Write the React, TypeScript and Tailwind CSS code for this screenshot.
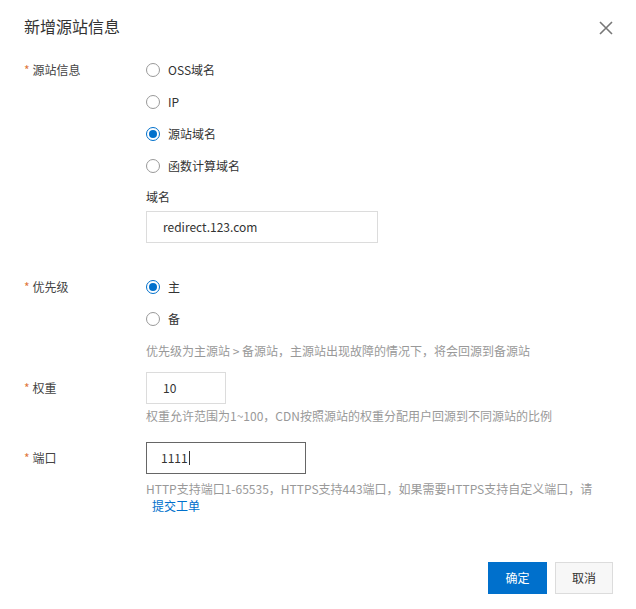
import React from 'react';

const font = { fontFamily: '"Noto Sans CJK SC", "Liberation Sans", sans-serif' };

function Radio({ checked, label }: { checked?: boolean; label: string }) {
  return (
    <div className="flex items-center h-8">
      <span className={checked
        ? "w-[14px] h-[14px] rounded-full border border-[#0070cc] flex items-center justify-center"
        : "w-[14px] h-[14px] rounded-full border border-[#999] bg-white"}>
        {checked && <span className="w-[8px] h-[8px] rounded-full bg-[#0070cc]" />}
      </span>
      <span className="ml-[8px] text-[12px] text-[#333]">{label}</span>
    </div>
  );
}

function Label({ text }: { text: string }) {
  return (
    <div className="w-[122px] shrink-0 text-[12px] text-[#444] h-8 flex items-center">
      <span className="text-[#e0763b] mr-[3px]">*</span>{text}
    </div>
  );
}

export default function App() {
  return (
    <div className="w-[636px] h-[609px] bg-white relative" style={font}>
      <div className="flex items-center justify-between pl-[24px] pr-[22px] pt-[14px]">
        <h1 className="text-[16px] text-[#333]">新增源站信息</h1>
        <svg width="16" height="16" viewBox="0 0 16 16" className="mt-[4px]">
          <path d="M2 2L14 14M14 2L2 14" stroke="#777" strokeWidth="1.6" />
        </svg>
      </div>

      <div className="pl-[24px] pt-[16px]">
        <div className="flex">
          <Label text="源站信息" />
          <div>
            <Radio label="OSS域名" />
            <Radio label="IP" />
            <Radio checked label="源站域名" />
            <Radio label="函数计算域名" />
            <div className="text-[12px] text-[#333] h-[28px] flex items-center mt-[1px]">域名</div>
            <div className="w-[232px] h-[32px] border border-[#dcdcdc] flex items-center pl-[16px] text-[12px] text-[#333]">redirect.123.com</div>
          </div>
        </div>

        <div className="flex mt-[28px]">
          <Label text="优先级" />
          <div>
            <Radio checked label="主" />
            <Radio label="备" />
            <div className="text-[12px] text-[#999] h-[31px] flex items-center">优先级为主源站 &gt; 备源站，主源站出现故障的情况下，将会回源到备源站</div>
          </div>
        </div>

        <div className="flex mt-[6px]">
          <Label text="权重" />
          <div>
            <div className="w-[80px] h-[32px] border border-[#dcdcdc] flex items-center pl-[16px] text-[12px] text-[#333]">10</div>
            <div className="text-[12px] text-[#999] h-[22px] flex items-center mt-[1px]">权重允许范围为1~100，CDN按照源站的权重分配用户回源到不同源站的比例</div>
          </div>
        </div>

        <div className="flex mt-[15px]">
          <Label text="端口" />
          <div>
            <div className="w-[160px] h-[32px] border border-[#666] flex items-center pl-[14px] text-[12px] text-[#333]">1111<span className="w-px h-[14px] bg-[#333] ml-px" /></div>
            <div className="text-[12px] text-[#999] mt-[6px] leading-[17px]">HTTP支持端口1-65535，HTTPS支持443端口，如果需要HTTPS支持自定义端口，请</div>
            <div className="text-[12px] text-[#0070cc] pl-[6px] leading-[17px]">提交工单</div>
          </div>
        </div>
      </div>

      <div className="absolute right-[23px] top-[562px] flex gap-[8px]">
        <button className="w-[59px] h-[32px] bg-[#0070cc] text-white text-[12px]">确定</button>
        <button className="w-[58px] h-[32px] bg-[#f7f7f7] border border-[#dcdcdc] text-[#333] text-[12px]">取消</button>
      </div>
    </div>
  );
}
